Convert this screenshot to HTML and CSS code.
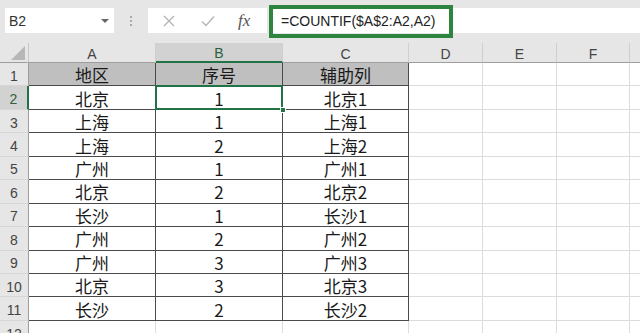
FILE: index.html
```html
<!DOCTYPE html>
<html lang="zh">
<head>
  <meta charset="UTF-8">
  <title>COUNTIF 序号</title>
  <link rel="stylesheet" href="styles.css">
</head>
<body>
  <div class="toolbar">
    <div class="namebox">
      <span>B2</span>
      <span class="caret"></span>
    </div>
    <div class="grip"><i></i><i></i><i></i></div>
    <div class="fxbox">
      <svg class="ico" width="14" height="14" viewBox="0 0 14 14"><path d="M2 2 L12 12 M12 2 L2 12" stroke="#b5b5b5" stroke-width="1.4" fill="none"/></svg>
      <svg class="ico" width="16" height="14" viewBox="0 0 16 14"><path d="M2 7.5 L6 11.5 L14 2.5" stroke="#b5b5b5" stroke-width="1.4" fill="none"/></svg>
      <span class="fx">fx</span>
    </div>
    <div class="formula">
      <div class="mark">=COUNTIF($A$2:A2,A2)</div>
    </div>
  </div>

  <div class="sheet">
    <div class="corner"><span class="tri"></span></div>
    <div class="colh">A</div>
    <div class="colh sel">B</div>
    <div class="colh">C</div>
    <div class="colh">D</div>
    <div class="colh">E</div>
    <div class="colh">F</div>
    <div class="colh last"></div>

    <div class="rowh">1</div>
    <div class="cell d head">地区</div>
    <div class="cell d head">序号</div>
    <div class="cell d head">辅助列</div>
    <div class="cell"></div><div class="cell"></div><div class="cell"></div><div class="cell last"></div>

    <div class="rowh sel">2</div>
    <div class="cell d">北京</div>
    <div class="cell d active">1</div>
    <div class="cell d">北京1</div>
    <div class="cell"></div><div class="cell"></div><div class="cell"></div><div class="cell last"></div>

    <div class="rowh">3</div>
    <div class="cell d">上海</div>
    <div class="cell d">1</div>
    <div class="cell d">上海1</div>
    <div class="cell"></div><div class="cell"></div><div class="cell"></div><div class="cell last"></div>

    <div class="rowh">4</div>
    <div class="cell d">上海</div>
    <div class="cell d">2</div>
    <div class="cell d">上海2</div>
    <div class="cell"></div><div class="cell"></div><div class="cell"></div><div class="cell last"></div>

    <div class="rowh">5</div>
    <div class="cell d">广州</div>
    <div class="cell d">1</div>
    <div class="cell d">广州1</div>
    <div class="cell"></div><div class="cell"></div><div class="cell"></div><div class="cell last"></div>

    <div class="rowh">6</div>
    <div class="cell d">北京</div>
    <div class="cell d">2</div>
    <div class="cell d">北京2</div>
    <div class="cell"></div><div class="cell"></div><div class="cell"></div><div class="cell last"></div>

    <div class="rowh">7</div>
    <div class="cell d">长沙</div>
    <div class="cell d">1</div>
    <div class="cell d">长沙1</div>
    <div class="cell"></div><div class="cell"></div><div class="cell"></div><div class="cell last"></div>

    <div class="rowh">8</div>
    <div class="cell d">广州</div>
    <div class="cell d">2</div>
    <div class="cell d">广州2</div>
    <div class="cell"></div><div class="cell"></div><div class="cell"></div><div class="cell last"></div>

    <div class="rowh">9</div>
    <div class="cell d">广州</div>
    <div class="cell d">3</div>
    <div class="cell d">广州3</div>
    <div class="cell"></div><div class="cell"></div><div class="cell"></div><div class="cell last"></div>

    <div class="rowh">10</div>
    <div class="cell d">北京</div>
    <div class="cell d">3</div>
    <div class="cell d">北京3</div>
    <div class="cell"></div><div class="cell"></div><div class="cell"></div><div class="cell last"></div>

    <div class="rowh">11</div>
    <div class="cell d">长沙</div>
    <div class="cell d">2</div>
    <div class="cell d">长沙2</div>
    <div class="cell"></div><div class="cell"></div><div class="cell"></div><div class="cell last"></div>

    <div class="rowh">12</div>
    <div class="cell"></div><div class="cell"></div><div class="cell"></div>
    <div class="cell"></div><div class="cell"></div><div class="cell"></div><div class="cell last"></div>
  </div>
</body>
</html>
```

FILE: styles.css
```css
body {
  margin: 0;
  width: 640px;
  height: 333px;
  overflow: hidden;
  background-color: #fff;
  font-family: "Liberation Sans", "Noto Sans CJK SC", sans-serif;
}

.toolbar {
  height: 43px;
  background-color: #e6e6e6;
  display: flex;
  align-items: center;
  padding-left: 5px;
  box-sizing: border-box;
  padding-bottom: 2px;
}

.namebox {
  width: 109px;
  height: 25px;
  background-color: #fff;
  display: flex;
  align-items: center;
  justify-content: space-between;
  padding: 0 5px 0 4px;
  box-sizing: border-box;
  font-size: 14px;
  color: #333;
}

.caret {
  width: 0;
  height: 0;
  border-left: 4px solid transparent;
  border-right: 4px solid transparent;
  border-top: 4px solid #666;
  margin-top: 1px;
}

.grip {
  width: 34px;
  display: flex;
  flex-direction: column;
  align-items: center;
  gap: 2px;
}

.grip i {
  width: 2px;
  height: 2px;
  background-color: #a9a9a9;
}

.fxbox {
  width: 119px;
  height: 25px;
  background-color: #fff;
  display: flex;
  align-items: center;
  padding-left: 14px;
  gap: 24px;
  box-sizing: border-box;
}

.fx {
  font-family: "Liberation Serif", serif;
  font-style: italic;
  font-size: 17px;
  color: #555;
  margin-left: -2px;
}

.formula {
  flex: 1;
  height: 25px;
  margin-left: 2px;
  background-color: #fff;
  display: flex;
  align-items: center;
}

.mark {
  width: 184px;
  height: 33px;
  border: 4px solid #2e8540;
  box-sizing: border-box;
  padding-left: 8px;
  display: flex;
  align-items: center;
  font-size: 14px;
  color: #222;
  white-space: nowrap;
  margin-top: 1px;
}

.sheet {
  display: grid;
  grid-template-columns: 29px 127px 127px 126px 74px 74px 73px 1fr;
  grid-template-rows: 20px repeat(12, 23.45px);
}

.corner,
.colh,
.rowh {
  background-color: #e6e6e6;
  color: #444;
  box-sizing: border-box;
  display: flex;
  align-items: center;
  justify-content: center;
}

.corner {
  border-right: 1px solid #c8c8c8;
  border-bottom: 1px solid #9d9d9d;
  position: relative;
}

.tri {
  position: absolute;
  right: 3px;
  bottom: 2px;
  width: 14px;
  height: 14px;
  background-color: #b7b7b7;
  clip-path: polygon(100% 0, 100% 100%, 0 100%);
}

.colh {
  font-size: 14px;
  border-right: 1px solid #cfcfcf;
  border-bottom: 1px solid #9d9d9d;
  padding-top: 2px;
}

.colh.sel {
  background-color: #d2d2d2;
  color: #2d5e3e;
  border-bottom: 2px solid #217346;
}

.colh.last {
  border-right: none;
}

.rowh {
  font-size: 14px;
  border-right: 1px solid #9d9d9d;
  border-bottom: 1px solid #d6d6d6;
  padding-top: 3px;
}

.rowh.sel {
  background-color: #d2d2d2;
  color: #2d5e3e;
  border-right: 2px solid #217346;
}

.cell {
  box-sizing: border-box;
  border-right: 1px solid #dcdcdc;
  border-bottom: 1px solid #dcdcdc;
  display: flex;
  align-items: center;
  justify-content: center;
  font-family: "Noto Sans CJK SC", sans-serif;
  font-size: 17px;
  color: #1a1a1a;
  padding-top: 1px;
}

.cell.last {
  border-right: none;
}

.cell.d {
  border-right: 1px solid #4a4a4a;
  border-bottom: 1px solid #4a4a4a;
}

.cell.head {
  background-color: #bfbfbf;
}

.cell.active {
  position: relative;
}

.cell.active::before {
  content: "";
  position: absolute;
  left: -1px;
  top: -1px;
  right: -1px;
  bottom: -1px;
  border: 2px solid #217346;
}

.cell.active::after {
  content: "";
  position: absolute;
  right: -4px;
  bottom: -4px;
  width: 6px;
  height: 6px;
  background-color: #217346;
  border: 1px solid #fff;
  box-sizing: border-box;
}
```
